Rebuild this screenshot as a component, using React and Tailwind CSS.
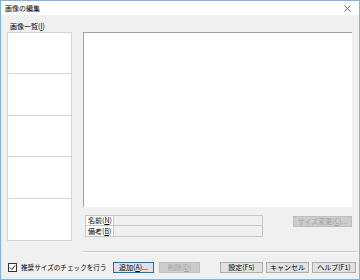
import React from 'react'

const font = { fontFamily: '"Noto Sans CJK JP", "Noto Sans", sans-serif' }

function Btn({ children, disabled, focused, className = '' }) {
  return (
    <div
      className={
        'flex h-[11px] shrink-0 items-center justify-center whitespace-nowrap border text-[7px] leading-none ' +
        (disabled
          ? 'border-[#bfbfbf] bg-[#cccccc] text-[#a3a3a3] '
          : focused
            ? 'border-[#0078d7] bg-[#e1e1e1] text-black '
            : 'border-[#adadad] bg-[#e1e1e1] text-black ') +
        className
      }
    >
      {children}
    </div>
  )
}

export default function App() {
  return (
    <div
      style={font}
      className="flex h-[280px] w-[360px] flex-col border border-[#7eb3e6] bg-[#f0f0f0] text-black"
    >
      {/* タイトルバー */}
      <div className="flex h-[15px] items-center justify-between bg-white pl-[4px] pr-[8px]">
        <span className="text-[7px] leading-none">画像の編集</span>
        <svg width="7" height="7" viewBox="0 0 7 7" className="mt-[1px]">
          <path d="M0.5 0.5 L6.5 6.5 M6.5 0.5 L0.5 6.5" stroke="#555" strokeWidth="0.9" />
        </svg>
      </div>

      {/* 本体 */}
      <div className="flex flex-1 pl-[6px]">
        {/* 画像一覧 */}
        <div className="flex w-[65px] flex-col">
          <div className="mt-[6px] h-[10px] pl-[3px] text-[7px] leading-[10px]">
            画像一覧(<span className="underline">I</span>)
          </div>
          <div className="mt-[1px] flex h-[209px] flex-col border border-[#d5d5d5] bg-white">
            <div className="h-[41px] border-b border-[#d5d5d5]" />
            <div className="h-[42px] border-b border-[#d5d5d5]" />
            <div className="h-[41px] border-b border-[#d5d5d5]" />
            <div className="h-[42px] border-b border-[#d5d5d5]" />
            <div className="flex-1" />
          </div>
        </div>

        {/* 右側 */}
        <div className="ml-[11px] flex flex-1 flex-col">
          <div className="mt-[17px] mr-[7px] h-[175px] border-l border-t border-[#a0a0a0] bg-white" />

          <div className="mt-[8px] mr-[7px] flex items-start">
            <div className="ml-[2px] w-[178px] border border-[#c8c8c8] text-[7px] leading-none">
              <div className="flex h-[10px] border-b border-[#c8c8c8]">
                <div className="flex w-[28px] items-center border-r border-[#c8c8c8] bg-white pl-[2px]">
                  名前(<span className="underline">N</span>)
                </div>
                <div className="flex-1 bg-[#f0f0f0]" />
              </div>
              <div className="flex h-[10px]">
                <div className="flex w-[28px] items-center border-r border-[#c8c8c8] bg-white pl-[2px]">
                  備考(<span className="underline">B</span>)
                </div>
                <div className="flex-1 bg-[#f0f0f0]" />
              </div>
            </div>
            <div className="flex-1" />
            <Btn disabled className="mt-[1px] w-[59px]">
              サイズ変更(<span className="underline">C</span>)...
            </Btn>
          </div>

          <div className="mt-[14px] mr-[2px] h-px bg-[#c8c8c8]" />
          <div className="h-px mr-[2px] bg-white" />
        </div>
      </div>

      {/* 下部ボタン行 */}
      <div className="mb-[6px] mt-[9px] flex h-[11px] items-center pl-[7px] pr-[3px]">
        <div className="flex h-[9px] w-[9px] shrink-0 items-center justify-center border border-[#333] bg-white">
          <svg width="7" height="7" viewBox="0 0 7 7">
            <path d="M1 3.5 L3 5.5 L6.2 1.3" fill="none" stroke="#222" strokeWidth="1" />
          </svg>
        </div>
        <span className="ml-[4px] w-[92px] shrink-0 whitespace-nowrap text-[6.6px] leading-none">
          推奨サイズのチェックを行う
        </span>
        <Btn focused className="w-[41px]">
          追加(<span className="underline">A</span>)...
        </Btn>
        <Btn disabled className="ml-[5px] w-[41px]">
          削除(<span className="underline">D</span>)
        </Btn>
        <div className="flex-1" />
        <Btn className="w-[43px]">設定(F5)</Btn>
        <Btn className="ml-[3px] w-[43px]">キャンセル</Btn>
        <Btn className="ml-[3px] w-[44px]">ヘルプ(F1)</Btn>
      </div>
    </div>
  )
}
